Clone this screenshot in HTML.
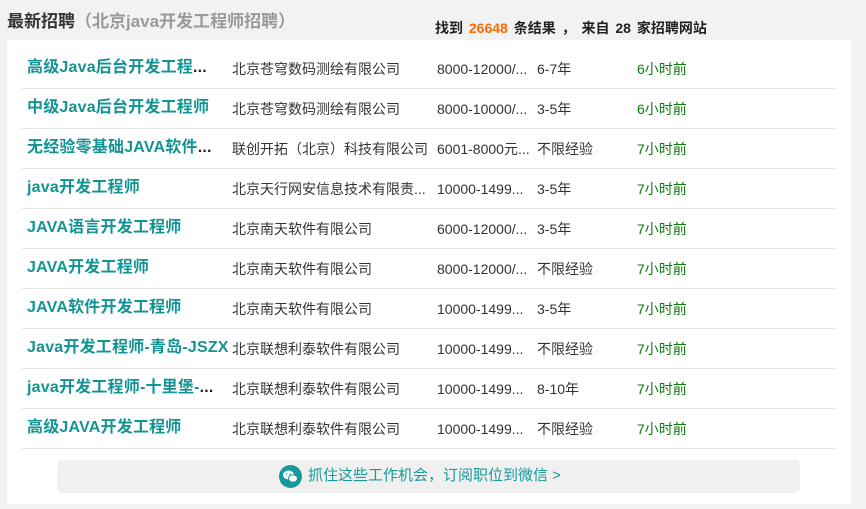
<!DOCTYPE html>
<html><head><meta charset="utf-8"><style>
*{margin:0;padding:0;box-sizing:border-box}
body{width:866px;height:509px;background:#f2f2f2;font-family:"Liberation Sans","Noto Sans CJK SC",sans-serif;position:relative;overflow:hidden}
.h{position:absolute;left:7px;top:11px;font-size:17px;font-weight:bold;color:#333;line-height:22px}
.h span{color:#999;font-weight:bold}
.st{position:absolute;left:435px;top:19px;font-size:14px;font-weight:bold;color:#222;line-height:18px;word-spacing:2px}
.st b{color:#ff6a00}
.panel{position:absolute;left:7px;top:40px;width:844px;height:464px;background:#fff}
.row{position:absolute;left:15px;width:814px;height:41px;border-bottom:1px solid #e6e6e6}
.row div{position:absolute;top:11px;line-height:20px;white-space:nowrap;font-size:14px;color:#333}
.t{left:5px;font-size:16px!important;font-weight:bold;color:#139393!important;top:10px!important;letter-spacing:0.2px}
.t i{font-style:normal;color:#222}
.c{left:210px}.s{left:415px}.e{left:515px}.m{left:615px;color:#0a7d0a!important}
.btn{position:absolute;left:50px;top:420px;width:743px;height:33px;background:#f0f0f0;border-radius:5px}
.btn .ic{position:absolute;left:222px;top:5px;width:23px;height:23px;border-radius:50%;background:#16999a}
.btn .tx{position:absolute;left:251px;top:6px;font-size:15px;color:#169a9a;line-height:20px}
</style></head><body>
<div class="h">最新招聘<span>（北京java开发工程师招聘）</span></div>
<div class="st">找到 <b>26648</b> 条结果 ， 来自 28 家招聘网站</div>
<div class="panel">
<div class="row" style="top:8px"><div class="t">高级Java后台开发工程<i>...</i></div><div class="c">北京苍穹数码测绘有限公司</div><div class="s">8000-12000/...</div><div class="e">6-7年</div><div class="m">6小时前</div></div>
<div class="row" style="top:48px"><div class="t">中级Java后台开发工程师</div><div class="c">北京苍穹数码测绘有限公司</div><div class="s">8000-10000/...</div><div class="e">3-5年</div><div class="m">6小时前</div></div>
<div class="row" style="top:88px"><div class="t">无经验零基础JAVA软件<i>...</i></div><div class="c">联创开拓（北京）科技有限公司</div><div class="s">6001-8000元...</div><div class="e">不限经验</div><div class="m">7小时前</div></div>
<div class="row" style="top:128px"><div class="t">java开发工程师</div><div class="c">北京天行网安信息技术有限责...</div><div class="s">10000-1499...</div><div class="e">3-5年</div><div class="m">7小时前</div></div>
<div class="row" style="top:168px"><div class="t">JAVA语言开发工程师</div><div class="c">北京南天软件有限公司</div><div class="s">6000-12000/...</div><div class="e">3-5年</div><div class="m">7小时前</div></div>
<div class="row" style="top:208px"><div class="t">JAVA开发工程师</div><div class="c">北京南天软件有限公司</div><div class="s">8000-12000/...</div><div class="e">不限经验</div><div class="m">7小时前</div></div>
<div class="row" style="top:248px"><div class="t">JAVA软件开发工程师</div><div class="c">北京南天软件有限公司</div><div class="s">10000-1499...</div><div class="e">3-5年</div><div class="m">7小时前</div></div>
<div class="row" style="top:288px"><div class="t">Java开发工程师-青岛-JSZX</div><div class="c">北京联想利泰软件有限公司</div><div class="s">10000-1499...</div><div class="e">不限经验</div><div class="m">7小时前</div></div>
<div class="row" style="top:328px"><div class="t">java开发工程师-十里堡-<i>...</i></div><div class="c">北京联想利泰软件有限公司</div><div class="s">10000-1499...</div><div class="e">8-10年</div><div class="m">7小时前</div></div>
<div class="row" style="top:368px"><div class="t">高级JAVA开发工程师</div><div class="c">北京联想利泰软件有限公司</div><div class="s">10000-1499...</div><div class="e">不限经验</div><div class="m">7小时前</div></div>
<div class="btn"><div class="ic"><svg width="23" height="23" viewBox="0 0 23 23"><ellipse cx="9.5" cy="10" rx="5.5" ry="4.5" fill="#fff"/><ellipse cx="14" cy="13.5" rx="4.5" ry="3.8" fill="#fff" stroke="#16999a" stroke-width="1"/><circle cx="7.5" cy="9" r=".8" fill="#16999a"/><circle cx="11" cy="9" r=".8" fill="#16999a"/></svg></div><div class="tx">抓住这些工作机会，订阅职位到微信 &gt;</div></div>
</div>
</body></html>
